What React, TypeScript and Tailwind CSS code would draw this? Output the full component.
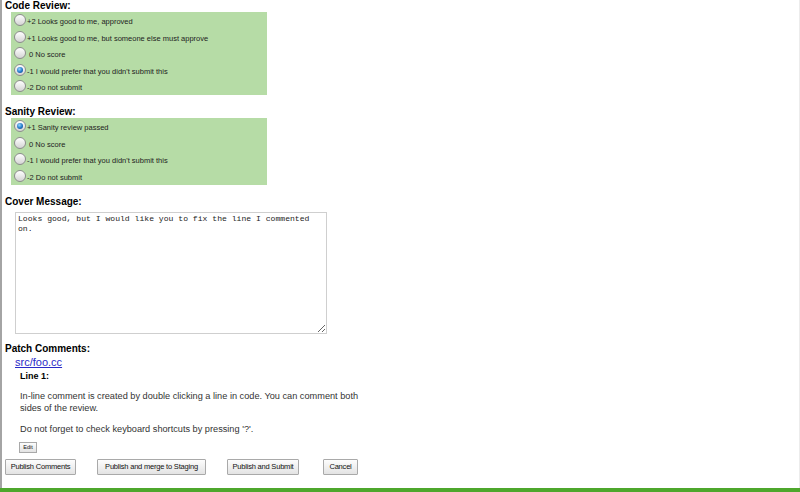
import React from "react";

const codeReview = [
  { label: "+2 Looks good to me, approved" },
  { label: "+1 Looks good to me, but someone else must approve" },
  { label: "\u00a00 No score" },
  { label: "-1 I would prefer that you didn't submit this", checked: true },
  { label: "-2 Do not submit" },
];

const sanityReview = [
  { label: "+1 Sanity review passed", checked: true },
  { label: "\u00a00 No score" },
  { label: "-1 I would prefer that you didn't submit this" },
  { label: "-2 Do not submit" },
];

function Radio({ checked }: { checked?: boolean }) {
  return (
    <span className="relative inline-block w-[12px] h-[12px] shrink-0 rounded-full border border-[#8c8c8c] bg-[linear-gradient(#ffffff,#d4d4d4)]">
      {checked && (
        <span className="absolute inset-[2px] rounded-full bg-[radial-gradient(circle_at_40%_35%,#9ad6ff,#1f78c8_55%,#0c3f80)]" />
      )}
    </span>
  );
}

function ScoreBox({ items }: { items: { label: string; checked?: boolean }[] }) {
  return (
    <div className="ml-[6px] w-[256px] bg-[#b6dca6] pb-[0.5px]">
      {items.map((item, i) => (
        <div key={i} className="flex items-center h-[16.5px] pl-[3px]">
          <Radio checked={item.checked} />
          <span className="ml-[1px] mt-[3px] text-[7.5px] leading-[9px] text-[#222]">
            {item.label}
          </span>
        </div>
      ))}
    </div>
  );
}

function Btn({ children, w }: { children: React.ReactNode; w: string }) {
  return (
    <button
      className={`${w} h-[16px] border border-[#a9a9a9] rounded-[1px] bg-[linear-gradient(#fdfdfd,#e3e3e3)] text-[7.5px] leading-[14px] text-[#111] tracking-[-0.2px]`}
    >
      {children}
    </button>
  );
}

export default function App() {
  return (
    <div className="w-[800px] h-[492px] flex flex-col bg-white font-['Liberation_Sans',Arial,sans-serif] text-black overflow-hidden">
      <div className="flex-1 border-l-2 border-l-[#a4a4a4] border-r border-r-[#ececec] pl-[3px]">
        <h2 className="text-[10px] font-bold leading-[12px]">Code Review:</h2>
        <ScoreBox items={codeReview} />

        <h2 className="mt-[11px] text-[10px] font-bold leading-[12px]">Sanity Review:</h2>
        <ScoreBox items={sanityReview} />

        <h2 className="mt-[11px] text-[10px] font-bold leading-[12px]">Cover Message:</h2>
        <textarea
          readOnly
          defaultValue="Looks good, but I would like you to fix the line I commented on."
          className="block mt-[4px] ml-[10px] w-[312px] h-[122px] border border-[#cfcfcf] px-[2px] pt-[1px] font-['Liberation_Mono','Courier_New',monospace] text-[8.1px] leading-[10.5px] text-[#222] resize outline-none"
        />

        <h2 className="mt-[9px] text-[10px] font-bold leading-[12px]">Patch Comments:</h2>
        <a href="#" className="block ml-[10px] mt-[1px] w-fit text-[11px] leading-[13px] text-[#2a2ac8] underline">
          src/foo.cc
        </a>
        <div className="ml-[15px]">
          <div className="mt-[2px] text-[9px] font-bold leading-[11px]">Line 1:</div>
          <p className="mt-[8px] w-[345px] text-[9.2px] leading-[12px] text-[#333]">
            In-line comment is created by double clicking a line in code. You can comment both
            sides of the review.
          </p>
          <p className="mt-[9px] text-[9.2px] leading-[12px] text-[#333]">
            Do not forget to check keyboard shortcuts by pressing '?'.
          </p>
          <button className="mt-[7px] ml-[-1px] block w-[18px] h-[11px] border border-[#a9a9a9] bg-[linear-gradient(#fdfdfd,#e3e3e3)] text-[5.5px] leading-[9px] text-[#111]">
            Edit
          </button>
        </div>
        <div className="flex gap-[21px] mt-[6px]">
          <Btn w="w-[71px]">Publish Comments</Btn>
          <Btn w="w-[109px]">Publish and merge to Staging</Btn>
          <Btn w="w-[72px]">Publish and Submit</Btn>
          <span className="ml-[3px] flex">
            <Btn w="w-[35px]">Cancel</Btn>
          </span>
        </div>
      </div>
      <div className="h-[4px] bg-[#4ea72c]" />
    </div>
  );
}
